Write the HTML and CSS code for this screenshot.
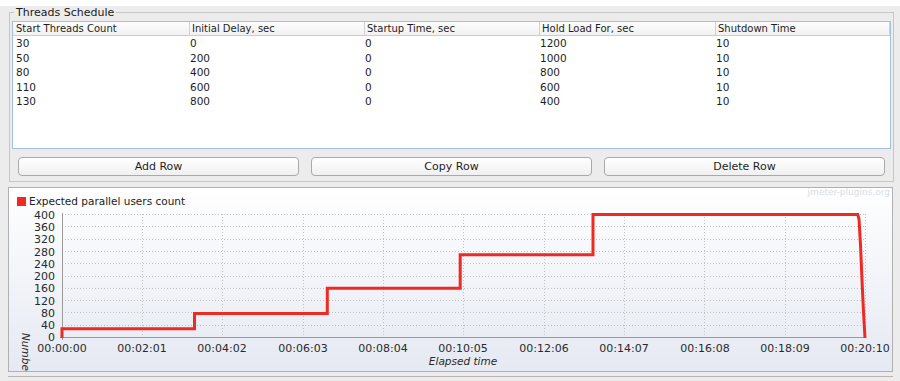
FILE: index.html
```html
<!DOCTYPE html>
<html lang="en">
<head>
  <meta charset="UTF-8">
  <title>Threads Schedule</title>
  <link rel="stylesheet" href="styles.css">
</head>
<body>
  <div class="topbar"></div>

  <fieldset class="schedule">
    <legend>Threads Schedule</legend>
    <div class="table-box">
      <div class="grid head">
        <div class="cell">Start Threads Count</div>
        <div class="cell">Initial Delay, sec</div>
        <div class="cell">Startup Time, sec</div>
        <div class="cell">Hold Load For, sec</div>
        <div class="cell">Shutdown Time</div>
      </div>
      <div class="grid row"><div>30</div><div>0</div><div>0</div><div>1200</div><div>10</div></div>
      <div class="grid row"><div>50</div><div>200</div><div>0</div><div>1000</div><div>10</div></div>
      <div class="grid row"><div>80</div><div>400</div><div>0</div><div>800</div><div>10</div></div>
      <div class="grid row"><div>110</div><div>600</div><div>0</div><div>600</div><div>10</div></div>
      <div class="grid row"><div>130</div><div>800</div><div>0</div><div>400</div><div>10</div></div>
    </div>
    <div class="buttons">
      <button class="btn">Add Row</button>
      <button class="btn">Copy Row</button>
      <button class="btn">Delete Row</button>
    </div>
  </fieldset>

  <div class="chart">
    <!-- viewBox uses page coordinates so the numbers below read like the screenshot -->
    <svg width="883" height="183" viewBox="9 188 883 183">
      <defs>
        <linearGradient id="bg" x1="0" y1="0" x2="0" y2="1">
          <stop offset="0" stop-color="#ffffff"/>
          <stop offset="1" stop-color="#e5e9f2"/>
        </linearGradient>
      </defs>
      <rect x="9" y="188" width="883" height="183" fill="url(#bg)"/>

      <rect x="17" y="197" width="9" height="9" fill="#ee2a22"/>
      <text class="legend" x="29" y="205">Expected parallel users count</text>
      <text class="mark" x="890" y="195" text-anchor="end">jmeter-plugins.org</text>

      <g class="grid-lines">
        <line x1="62" y1="325.5" x2="865" y2="325.5"/>
        <line x1="62" y1="312.5" x2="865" y2="312.5"/>
        <line x1="62" y1="300.5" x2="865" y2="300.5"/>
        <line x1="62" y1="288.5" x2="865" y2="288.5"/>
        <line x1="62" y1="276.5" x2="865" y2="276.5"/>
        <line x1="62" y1="263.5" x2="865" y2="263.5"/>
        <line x1="62" y1="251.5" x2="865" y2="251.5"/>
        <line x1="62" y1="239.5" x2="865" y2="239.5"/>
        <line x1="62" y1="226.5" x2="865" y2="226.5"/>
        <line x1="62" y1="214.5" x2="865" y2="214.5"/>
        <line x1="142.5" y1="214" x2="142.5" y2="337"/>
        <line x1="222.5" y1="214" x2="222.5" y2="337"/>
        <line x1="303.5" y1="214" x2="303.5" y2="337"/>
        <line x1="383.5" y1="214" x2="383.5" y2="337"/>
        <line x1="463.5" y1="214" x2="463.5" y2="337"/>
        <line x1="544.5" y1="214" x2="544.5" y2="337"/>
        <line x1="624.5" y1="214" x2="624.5" y2="337"/>
        <line x1="704.5" y1="214" x2="704.5" y2="337"/>
        <line x1="785.5" y1="214" x2="785.5" y2="337"/>
        <line x1="865.5" y1="214" x2="865.5" y2="337"/>
      </g>

      <g class="axis">
        <line x1="62.5" y1="213" x2="62.5" y2="340"/>
        <line x1="60" y1="337.5" x2="866" y2="337.5"/>
      </g>

      <g class="ylabels" text-anchor="end">
        <text x="55" y="219">400</text>
        <text x="55" y="231">360</text>
        <text x="55" y="243">320</text>
        <text x="55" y="256">280</text>
        <text x="55" y="268">240</text>
        <text x="55" y="280">200</text>
        <text x="55" y="292">160</text>
        <text x="55" y="305">120</text>
        <text x="55" y="317">80</text>
        <text x="55" y="329">40</text>
        <text x="55" y="341">0</text>
      </g>

      <g class="xlabels" text-anchor="middle">
        <text x="62" y="352">00:00:00</text>
        <text x="142" y="352">00:02:01</text>
        <text x="222" y="352">00:04:02</text>
        <text x="303" y="352">00:06:03</text>
        <text x="383" y="352">00:08:04</text>
        <text x="463" y="352">00:10:05</text>
        <text x="544" y="352">00:12:06</text>
        <text x="624" y="352">00:14:07</text>
        <text x="705" y="352">00:16:08</text>
        <text x="785" y="352">00:18:09</text>
        <text x="865" y="352">00:20:10</text>
      </g>

      <text class="title" x="463" y="365" text-anchor="middle">Elapsed time</text>
      <text class="title" transform="translate(22 333) rotate(90)">Number of active threads</text>

      <path class="series" d="M62 338 V328.8 H194.5 V313.4 H327.3 V288.3 H460.2 V254.8 H593 V214.5 H857.8 L859 219 L860.5 245 L862 280 L863.5 312 L865 338"/>
    </svg>
  </div>
  <div class="chart-foot"></div>
</body>
</html>
```

FILE: styles.css
```css
body {
  margin: 0;
  background: #ececec;
  font-family: "DejaVu Sans", sans-serif;
  color: #1e1e1e;
  height: 381px;
  overflow: hidden;
}

.topbar {
  height: 6px;
  background: #fff;
}

/* Threads schedule group */
.schedule {
  margin: 0 7px 0 9px;
  padding: 2px 2px 5px 2px;
  border: 1px solid #c6c6c6;
}

.schedule legend {
  font-size: 11px;
  line-height: 13px;
  padding: 0 2px;
  margin-left: 2px;
  color: #1a1a1a;
}

.table-box {
  height: 128px;
  box-sizing: border-box;
  background: #fff;
  border: 1px solid #a3c0e4;
}

.grid {
  display: grid;
  grid-template-columns: 176px 175px 175px 176px 174px 1fr;
}

.head {
  height: 13px;
  line-height: 13px;
  font-size: 10px;
  background: linear-gradient(#fdfdfd, #f1f1f1);
  border-bottom: 1px solid #cdcdcd;
}

.head .cell {
  padding-left: 3px;
  white-space: nowrap;
  overflow: hidden;
}

.head .cell + .cell {
  border-left: 1px solid #d2d2d2;
  padding-left: 2px;
}

.head::after {
  content: "";
  border-left: 1px solid #d2d2d2;
}

.row {
  height: 14.6px;
  line-height: 14.6px;
  font-size: 10.5px;
}

.row div {
  padding-left: 3px;
}

.row div + div {
  padding-left: 1px;
}

.buttons {
  display: flex;
  gap: 12px;
  padding: 0 6px;
  margin-top: 8px;
}

.btn {
  flex: 1;
  height: 19px;
  padding: 0;
  font-family: "DejaVu Sans", sans-serif;
  font-size: 11px;
  color: #1e1e1e;
  background: linear-gradient(#ffffff, #f0f0f0);
  border: 1px solid #a9a9a9;
  border-radius: 4px;
}

/* Chart */
.chart {
  margin: 5px 7px 0 8px;
  border: 1px solid #b0b0b0;
  height: 183px;
}

.chart svg {
  display: block;
}

.legend {
  font-size: 10.5px;
  fill: #222;
}

.mark {
  font-size: 9px;
  fill: #d9dde5;
}

.grid-lines line {
  stroke: #c2c2c2;
  stroke-width: 1;
  stroke-dasharray: 1 2;
}

.axis line {
  stroke: #9a9a9a;
  stroke-width: 1;
}

.ylabels text,
.xlabels text {
  font-size: 11px;
  fill: #2a2a2a;
}

.title {
  font-size: 10.5px;
  font-style: italic;
  fill: #2a2a2a;
}

.series {
  fill: none;
  stroke: #ee2a22;
  stroke-width: 3;
}

.chart-foot {
  margin: 0 7px 0 8px;
  height: 4px;
  border-bottom: 1px solid #b5b5b5;
}
```
